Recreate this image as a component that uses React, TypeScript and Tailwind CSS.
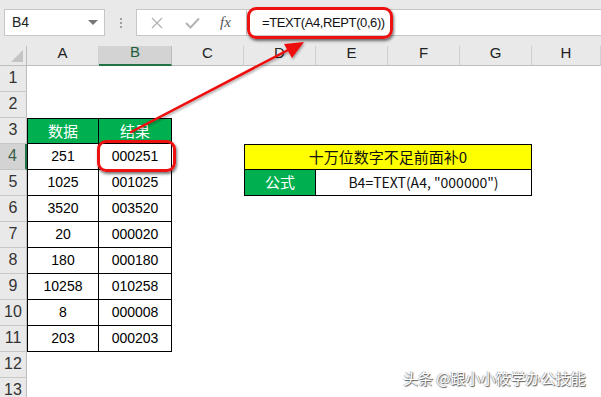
import React from "react";

const FONT = { fontFamily: '"Liberation Sans", Arial, "Noto Sans CJK SC", sans-serif' };
const CJK = { fontFamily: '"Noto Sans CJK SC", "Liberation Sans", sans-serif' };

const data = [
  ["251", "000251"],
  ["1025", "001025"],
  ["3520", "003520"],
  ["20", "000020"],
  ["180", "000180"],
  ["10258", "010258"],
  ["8", "000008"],
  ["203", "000203"],
];

const cols = ["A", "B", "C", "D", "E", "F", "G", "H"];

export default function App() {
  const rows = Array.from({ length: 13 }, (_, i) => i + 1);
  return (
    <div className="relative w-[601px] h-[397px] overflow-hidden bg-white text-black" style={FONT}>
      {/* formula bar */}
      <div className="h-[46px] bg-[#e9e9e9] flex items-start pt-[9px] pl-[4px]">
        <div className="w-[101px] h-[27px] bg-white border border-[#c6c6c6] flex items-center justify-between pl-[7px] pr-[6px]">
          <span className="text-[14px] text-[#222]">B4</span>
          <span className="w-0 h-0 border-l-[5px] border-r-[5px] border-t-[5px] border-l-transparent border-r-transparent border-t-[#777]" />
        </div>
        <div className="w-[31px] h-[27px] flex flex-col items-center justify-center gap-[2px]">
          <span className="w-[2px] h-[2px] bg-[#a0a0a0]" />
          <span className="w-[2px] h-[2px] bg-[#a0a0a0]" />
          <span className="w-[2px] h-[2px] bg-[#a0a0a0]" />
        </div>
        <div className="flex-1 h-[27px] bg-white border border-[#c6c6c6] border-r-0 flex items-center">
          <div className="w-[110px] h-full flex items-center border-r border-[#c6c6c6]">
            <svg width="12" height="12" viewBox="0 0 12 12" className="ml-[14px]">
              <path d="M1 1 L11 11 M11 1 L1 11" stroke="#b4b4b4" strokeWidth="1.4" />
            </svg>
            <svg width="15" height="12" viewBox="0 0 15 12" className="ml-[22px]">
              <path d="M1 6 L5.5 10.5 L14 1.5" stroke="#b4b4b4" strokeWidth="2" fill="none" />
            </svg>
            <span className="ml-[20px] text-[15px] italic text-[#555]" style={{ fontFamily: '"Liberation Serif", serif' }}>
              fx
            </span>
          </div>
          <span className="ml-[15px] text-[13px] tracking-[-0.4px] text-[#111]">=TEXT(A4,REPT(0,6))</span>
        </div>
      </div>

      {/* grid */}
      <div className="grid grid-cols-[27px_72px_73px_72px_72px_72px_72px_72px_1fr] grid-rows-[20px_repeat(13,26px)]">
        {/* corner */}
        <div className="bg-[#e9e9e9] border-r border-b border-[#bdbdbd] relative">
          <span className="absolute right-[3px] bottom-[3px] w-0 h-0" style={{ borderBottom: "12px solid #c4c4c4", borderLeft: "12px solid transparent" }} />
        </div>
        {cols.map((c) => (
          <div
            key={c}
            className={
              c === "B"
                ? "bg-[#d3d3d3] border-b-2 border-[#217346] border-r border-r-[#bdbdbd] flex items-end justify-center pb-[1px] text-[15px] text-[#1d5e3a]"
                : "bg-[#e9e9e9] border-b border-[#bdbdbd] border-r border-r-[#d0d0d0] flex items-end justify-center pb-[1px] text-[15px] text-[#222]"
            }
          >
            {c}
          </div>
        ))}

        {rows.map((r) => {
          const cells: React.ReactNode[] = [];
          cells.push(
            <div
              key={`h${r}`}
              className={
                r === 4
                  ? "bg-[#d3d3d3] border-b border-[#c4c4c4] border-r-2 border-r-[#217346] flex items-end justify-center pb-[1px] text-[16px] text-[#3b5e4a]"
                  : "bg-[#e9e9e9] border-b border-[#c8c8c8] border-r border-r-[#bdbdbd] flex items-end justify-center pb-[1px] text-[16px] text-[#333]"
              }
            >
              {r}
            </div>
          );
          if (r === 3) {
            cells.push(
              <div key="A3" className="bg-[#00b050] border border-black text-white text-[15px] flex items-center justify-center" style={CJK}>
                数据
              </div>,
              <div key="B3" className="bg-[#00b050] border-t border-r border-b border-black text-white text-[15px] flex items-center justify-center" style={CJK}>
                结果
              </div>,
              <div key="rest3" className="col-span-6" />
            );
          } else if (r >= 4 && r <= 11) {
            const d = data[r - 4];
            cells.push(
              <div key={`A${r}`} className="border-l border-r border-b border-black text-[14px] flex items-center justify-center">
                {d[0]}
              </div>,
              <div key={`B${r}`} className="border-r border-b border-black text-[14px] flex items-center justify-center">
                {d[1]}
              </div>,
              <div key={`C${r}`} />
            );
            if (r === 4) {
              cells.push(
                <div key="D4" className="col-span-4 bg-[#ffff00] border border-black flex items-center justify-center text-[15px] text-[#111]" style={CJK}>
                  十万位数字不足前面补0
                </div>,
                <div key="H4" />
              );
            } else if (r === 5) {
              cells.push(
                <div key="D5" className="bg-[#00b050] border-l border-r border-b border-black flex items-center justify-center text-[15px] text-white" style={CJK}>
                  公式
                </div>,
                <div key="E5" className="col-span-3 border-r border-b border-black flex items-center justify-center text-[14px] text-[#111]" style={CJK}>
                  B4=TEXT(A4, "000000")
                </div>,
                <div key="H5" />
              );
            } else {
              cells.push(<div key={`r${r}`} className="col-span-5" />);
            }
          } else {
            cells.push(<div key={`e${r}`} className="col-span-8" />);
          }
          return <React.Fragment key={r}>{cells}</React.Fragment>;
        })}
      </div>

      {/* red highlight on B4 */}
      <div className="absolute left-[97px] top-[140px] w-[79px] h-[32px] border-[3px] border-[#ee1111] rounded-[9px] shadow-[1px_2px_3px_rgba(0,0,0,0.55)]" />
      {/* red highlight on formula */}
      <div className="absolute left-[247px] top-[7px] w-[146px] h-[32px] border-[3px] border-[#ee1111] rounded-[9px] shadow-[1px_2px_3px_rgba(0,0,0,0.55)]" />

      {/* arrow */}
      <svg className="absolute left-0 top-0" width="601" height="397" viewBox="0 0 601 397">
        <defs>
          <filter id="sh" x="-10%" y="-10%" width="120%" height="120%">
            <feDropShadow dx="1" dy="1.5" stdDeviation="1" floodColor="#000" floodOpacity="0.35" />
          </filter>
        </defs>
        <g filter="url(#sh)">
          <line x1="131" y1="132" x2="292" y2="48" stroke="#ee1111" strokeWidth="2.5" strokeLinecap="round" />
          <polygon points="304,42 284,44 292,58" fill="#ee1111" />
        </g>
      </svg>

      {/* watermark */}
      <div
        className="absolute left-[403px] top-[367px] text-[15px] text-white whitespace-nowrap"
        style={{ ...CJK, textShadow: "1px 1px 1px #555, -0.5px -0.5px 1px #888" }}
      >
        头条 @跟小小筱学办公技能
      </div>
    </div>
  );
}
